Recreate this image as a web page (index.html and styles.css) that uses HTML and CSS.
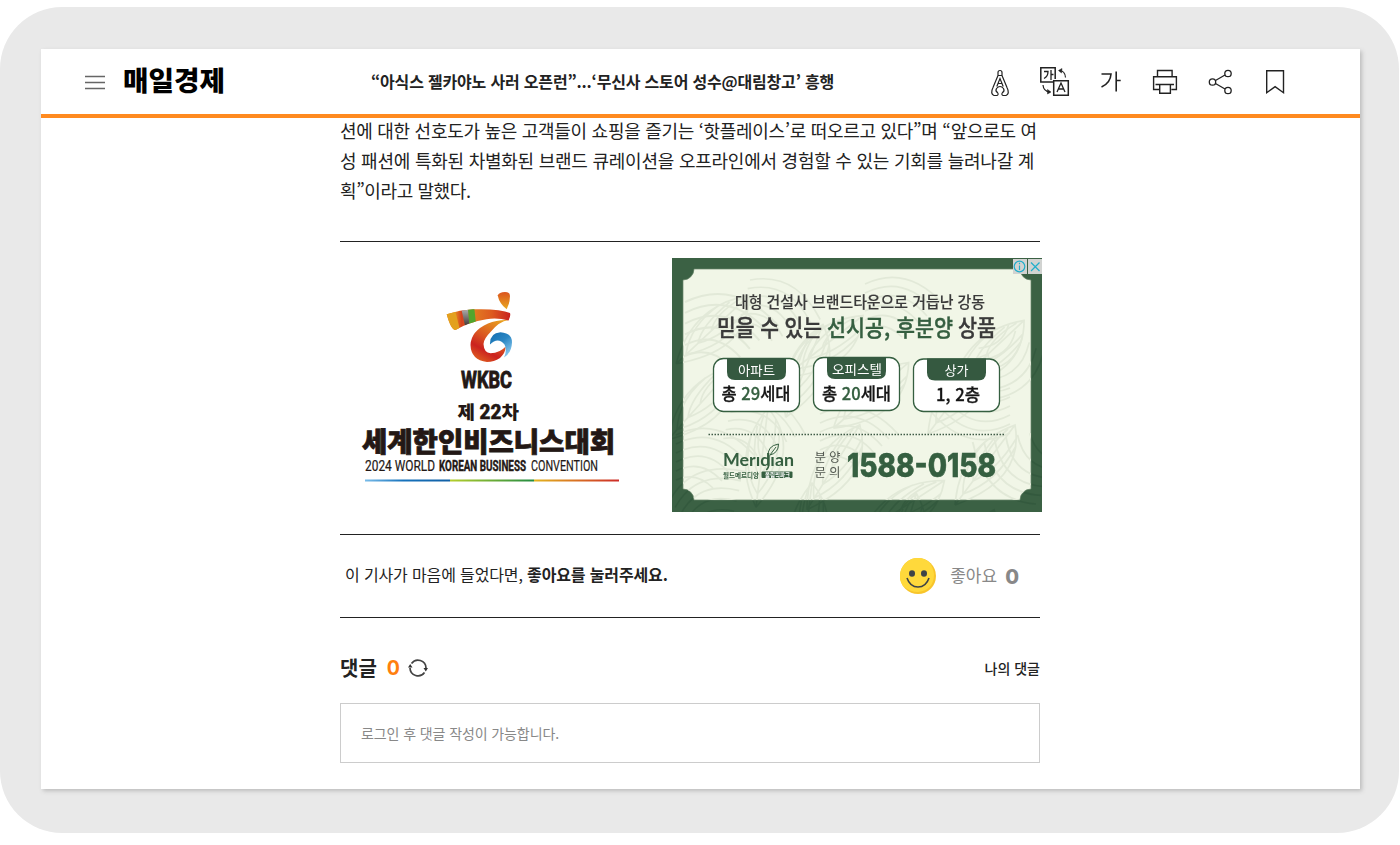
FILE: index.html
```html
<!DOCTYPE html>
<html lang="ko">
<head>
<meta charset="utf-8">
<title>매일경제</title>
<link rel="stylesheet" href="styles.css">
</head>
<body>
<div class="frame">
<div class="window">
  <header class="header">
    <svg class="menu" viewBox="0 0 20 15" width="20" height="15"><path d="M0 1.5h20M0 7.5h20M0 13.5h20" stroke="#666" stroke-width="1.3"/></svg>
    <svg class="logo" viewBox="0 0 104 44" width="104" height="44"><text x="1" y="31" textLength="102" lengthAdjust="spacingAndGlyphs">매일경제</text></svg>
    <h1 class="title">“아식스 젤카야노 사러 오픈런”...‘무신사 스토어 성수@대림창고’ 흥행</h1>
    <svg class="tools" viewBox="985 62 310 42" width="310" height="42">
      <g fill="none" stroke="#222" stroke-width="1.2">
        <path d="M998 76.500v-3q0-2 2-2t2 2v3M997.500 76.500h5M998 76.500l-5 12q-3 6 1 8h3q2-1 .5-3-2.500-1.500-1-4 1.500-2 3.500-2t3.500 2q1.500 2.500-1 4-1.500 2 .5 3h3q4-2 1-8l-5-12"/><path d="M996.800 87.500l3.200-8 3.200 8M998 84.500h4"/>
        <g stroke-width="1.5">
          <path d="M1053 83h-12.200V68.800h14.400V80M1053.700 81.800h14.600v14.400h-14.600z"/>
          <path d="M1044 72.500h4q0 5-4 7M1051 71v10M1051 75.500h2.500M1057 93l4-9 4 9M1058.500 90h5" stroke-width="1.3"/>
          <path d="M1059 71.500q6 0 6.500 7M1043 86q.5 6.500 7 7" stroke-width="1.200"/><path d="M1062 69.500l-3.500 2 3 2.500zM1047.500 90.500l3.500 2.500-3.500 2z" fill="#222" stroke-width=".5"/>
        </g>
        <path d="M1101.500 75h9.500q-.5 9-9.500 13M1116.200 72.500v20M1116.200 81.500h4.500" stroke-width="1.600"/>
        <path d="M1157.500 77.800v-6.300h14.600v6.300M1159 90.500h-5.400V77.800h22.800v12.700h-5M1155.500 85.500h18.500M1159.700 85.500h10.700v8.800h-10.700z" stroke-width="1.4"/>
        <path d="M1215.500 81.500l9.500-5.500M1215.500 84.500l9.500 5.500" stroke-width="1.3"/>
        <circle cx="1212.500" cy="83" r="3.200" stroke-width="1.300"/><circle cx="1228" cy="74.500" r="3.200" stroke-width="1.300"/><circle cx="1228" cy="91.500" r="3.200" stroke-width="1.300"/>
        <path d="M1266.700 71.700h16.800v22l-8.400-6-8.400 6z" stroke-width="1.400"/>
      </g>
    </svg>
  </header>
  <main class="article">
    <p class="body-text"><span class="line l1">션에 대한 선호도가 높은 고객들이 쇼핑을 즐기는 ‘핫플레이스’로 떠오르고 있다”며 “앞으로도 여</span><span class="line l2">성 패션에 특화된 차별화된 브랜드 큐레이션을 오프라인에서 경험할 수 있는 기회를 늘려나갈 계</span><span class="line l3">획”이라고 말했다.</span></p>
    <section class="ads">
      <svg viewBox="340 258 332 254" width="332" height="254" class="wkbc">
        <defs>
          <linearGradient id="drop" x2="0" y2="1"><stop stop-color="#db541e"/><stop offset="1" stop-color="#e9a91f"/></linearGradient>
          <linearGradient id="arm" gradientUnits="userSpaceOnUse" x1="447" x2="511" y1="0" y2="0"><stop offset=".15" stop-color="#e27b21"/><stop offset=".23" stop-color="#d5401f"/><stop offset=".42" stop-color="#e27b21"/><stop offset=".7" stop-color="#dd5a20"/><stop offset="1" stop-color="#c82021"/></linearGradient>
          <linearGradient id="curl" x1=".8" y1="0" x2=".3" y2="1"><stop stop-color="#e9a01f"/><stop offset=".5" stop-color="#d95220"/><stop offset=".75" stop-color="#cb221f"/><stop offset="1" stop-color="#dd5a20"/></linearGradient>
          <linearGradient id="wave" x2=".7" y2="1"><stop stop-color="#136db0"/><stop offset=".5" stop-color="#2a86c3"/><stop offset="1" stop-color="#8bcaf0"/></linearGradient>
          <linearGradient id="b1"><stop stop-color="#79bce9"/><stop offset=".45" stop-color="#1672bc"/><stop offset="1" stop-color="#1260a5"/></linearGradient>
          <linearGradient id="b2"><stop stop-color="#b5ce2b"/><stop offset="1" stop-color="#228b42"/></linearGradient>
          <linearGradient id="b3"><stop stop-color="#e3b51e"/><stop offset="1" stop-color="#cd2b28"/></linearGradient>
          <linearGradient id="grey" x2="0" y1=".2" y2=".9"><stop stop-color="#aaa"/><stop offset="1" stop-color="#3c3432"/></linearGradient>
          <clipPath id="armclip"><path d="M446.700 314.300Q460 310 473 309.300Q500 308.500 510 313Q511 316 508.500 320.500Q497 317.500 486.500 319.300Q468 322.500 455.500 330Q451 330 446.700 314.300Z"/></clipPath>
        </defs>
        <path d="M497.700 295.500Q499 292 505 292Q510 292 510 296Q510 303 506.700 309.300Q499.500 304 497.700 295.500Z" fill="url(#drop)"/>
        <path d="M508.500 320Q499 321.500 491 331.500Q483.500 339 483.500 344Q484 353 490.500 353.200Q500 353 505.700 346.500Q505.500 353 500 358Q494 362 487 362Q471 360 470.500 345Q471 331 488 323.500Q497 319.500 508.500 320Z" fill="url(#curl)"/>
        <g clip-path="url(#armclip)"><path d="M440 300h75v35h-75z" fill="url(#arm)"/><path d="M440 308h14.500l6 24h-20z" fill="#e3a11f"/><path d="M460.500 305h7.500l1.700 24h-4z" fill="url(#grey)"/><path d="M467.700 305h6.300l2.500 24h-6.800z" fill="#52a52d"/></g>
        <path d="M490 344.500Q489.500 333 500.500 332.300Q512 333 512 342.500Q511.500 353 504 357.500Q507.500 350 504.500 344.500Q498 336.500 490 344.500Z" fill="url(#wave)"/>
        <g fill="#231815" class="kr">
          <text x="461" y="388" class="latin" font-size="23" font-weight="700" textLength="51" lengthAdjust="spacingAndGlyphs" stroke="#231815" stroke-width=".9">WKBC</text>
          <g font-size="18.500" font-weight="900"><text x="457.500" y="418.500" textLength="17.500" lengthAdjust="spacingAndGlyphs">제</text><text x="479.500" y="418.500" textLength="22" lengthAdjust="spacingAndGlyphs" class="latin" font-size="20" stroke="#231815" stroke-width=".4">22</text><text x="501.500" y="418.500" textLength="17.500" lengthAdjust="spacingAndGlyphs">차</text></g>
          <text x="362" y="452" font-size="27" font-weight="900" textLength="253" lengthAdjust="spacingAndGlyphs" stroke="#231815" stroke-width=".8">세계한인비즈니스대회</text>
          <g class="latin" font-size="14.500"><text x="365" y="471" textLength="70" lengthAdjust="spacingAndGlyphs" stroke="#231815" stroke-width=".2">2024 WORLD</text><text x="439" y="471" font-weight="700" textLength="87" lengthAdjust="spacingAndGlyphs" stroke="#231815" stroke-width=".4">KOREAN BUSINESS</text><text x="531" y="471" textLength="67" lengthAdjust="spacingAndGlyphs" stroke="#231815" stroke-width=".2">CONVENTION</text></g>
        </g>
        <path fill="url(#b1)" d="M365 479.500h85v2h-85z"/><path fill="url(#b2)" d="M450 479.500h84v2h-84z"/><path fill="url(#b3)" d="M534 479.500h85v2h-85z"/>
      </svg>
      <svg viewBox="672 258 370 254" width="370" height="254" class="meridian">
        <defs>
          <g id="leaf" fill="none"><path d="M0 80Q5 20 60 0Q70 55 0 80M0 80L60 0M8 69Q7 40 32 15M8 69Q42 57 61 21M18 56Q18 38 42 10M18 56Q42 45 61 14M29 41Q29 25 53 4"/></g>
          <g id="arc" fill="none"><path d="M0 0Q42-20 78 20M0 9Q38-10 69 25M0 18Q35 0 62 32M0 27Q31 11 54 39M0 36Q25 23 46 46M0 45Q20 36 37 53"/></g>
          <clipPath id="inside"><path d="M694 269h326a11 11 0 0 0 11 11v209a11 11 0 0 0-11 11H694a11 11 0 0 0-11-11V280a11 11 0 0 0 11-11z"/></clipPath>
          <g id="foliage">
            <use href="#arc" transform="translate(685 302) scale(1.200)"/><use href="#leaf" transform="translate(675 360) rotate(5)"/><use href="#leaf" transform="translate(765 340) rotate(-15)"/><use href="#leaf" transform="translate(850 350) rotate(12)"/><use href="#arc" transform="translate(865 284)"/><use href="#leaf" transform="translate(928 354)"/><use href="#arc" transform="translate(1043 354) rotate(130)"/><use href="#leaf" transform="translate(716 438) rotate(-30)"/><use href="#arc" transform="translate(676 435)"/><use href="#leaf" transform="translate(800 430) rotate(-5)"/><use href="#arc" transform="translate(820 414)"/><use href="#leaf" transform="translate(888 460) rotate(20)"/><use href="#arc" transform="translate(1036 504) rotate(210) scale(1.100)"/><use href="#leaf" transform="translate(760 513) rotate(-30)"/><use href="#leaf" transform="translate(860 514) rotate(-20)"/><use href="#arc" transform="translate(1010 433) rotate(180)"/><use href="#leaf" transform="translate(955 425)"/>
            <use href="#leaf" transform="translate(965 310) rotate(10)"/><use href="#arc" transform="translate(750 280) rotate(15)"/><use href="#arc" transform="translate(670 500) rotate(-35)"/><use href="#leaf" transform="translate(690 285) rotate(10)"/><use href="#leaf" transform="translate(805 300) rotate(15)"/><use href="#arc" transform="translate(735 395) rotate(15)"/><use href="#leaf" transform="translate(935 520) rotate(-10)"/>
          </g>
        </defs>
        <path fill="#3b6144" d="M672 258h370v254H672z"/>
        <use href="#foliage" stroke="#2d5338" stroke-width="1.500" opacity=".5"/>
        <path d="M694 269h326a11 11 0 0 0 11 11v209a11 11 0 0 0-11 11H694a11 11 0 0 0-11-11V280a11 11 0 0 0 11-11z" fill="#f1f6e7" stroke="#68856a" stroke-width=".7"/>
        <g clip-path="url(#inside)"><use href="#foliage" stroke="#e2e9d8" stroke-width="1.700"/></g>
        <g class="kr" fill="#3a3a3a">
          <text x="735" y="308" font-size="15.500" font-weight="500" textLength="250" lengthAdjust="spacingAndGlyphs" stroke="#3a3a3a" stroke-width=".15">대형 건설사 브랜드타운으로 거듭난 강동</text>
          <g font-size="22.500" font-weight="500" stroke-width=".4"><text x="717" y="335.500" textLength="105" lengthAdjust="spacingAndGlyphs" stroke="#3a3a3a">믿을 수 있는</text><text x="827" y="335.500" textLength="126" lengthAdjust="spacingAndGlyphs" fill="#355f40" stroke="#355f40">선시공, 후분양</text><text x="958" y="335.500" textLength="38" lengthAdjust="spacingAndGlyphs" stroke="#3a3a3a">상품</text></g>
        </g>
        <g fill="#fff" stroke="#355f40" stroke-width="1.300"><rect x="713.500" y="358.500" width="86" height="53" rx="10"/><rect x="813.500" y="357.500" width="86" height="53" rx="10"/><rect x="913.500" y="359" width="86" height="52.500" rx="10"/></g>
        <g fill="#355940"><path d="M727 358h59v14q0 8-8 8h-43q-8 0-8-8zM827 357h59v14q0 8-8 8h-43q-8 0-8-8zM927 358.500h59v14q0 8-8 8h-43q-8 0-8-8z"/></g>
        <g class="kr" fill="#fff" font-size="13"><text x="738" y="375" textLength="37" lengthAdjust="spacingAndGlyphs">아파트</text><text x="832" y="374" textLength="50" lengthAdjust="spacingAndGlyphs">오피스텔</text><text x="944.500" y="375" textLength="24" lengthAdjust="spacingAndGlyphs">상가</text></g>
        <g class="kr" fill="#151515" font-size="17.500" font-weight="500" stroke="#151515" stroke-width=".3"><text x="721.500" y="400" textLength="69" lengthAdjust="spacingAndGlyphs">총 <tspan fill="#355f40" stroke="#355f40">29</tspan>세대</text><text x="822" y="400" textLength="69" lengthAdjust="spacingAndGlyphs">총 <tspan fill="#355f40" stroke="#355f40">20</tspan>세대</text><text x="936" y="401" textLength="44" lengthAdjust="spacingAndGlyphs">1, 2층</text></g>
        <path d="M708.500 434.500h296" stroke="#405c47" stroke-width="1.500" stroke-dasharray="1.500 1.500"/>
        <g fill="#355f40"><text x="723" y="465.500" class="brand" font-size="16.500" font-weight="700" textLength="71" lengthAdjust="spacingAndGlyphs">Merıdıan</text>
          <path d="M768.800 455v9q0 4-2.500 6" fill="none" stroke="#355f40" stroke-width="1.600"/><path d="M768.500 457q-2-11 10-13 0 9-8.500 11l6-8" fill="none" stroke="#355f40"/>
          <text x="723" y="477.500" class="kr" font-size="6.700" font-weight="700" textLength="36" lengthAdjust="spacingAndGlyphs">월드메르디앙</text><rect x="761.500" y="471.500" width="31" height="6.500" rx="1"/><text x="765" y="477" class="kr" font-size="6" fill="#fff" font-weight="700" textLength="25" lengthAdjust="spacingAndGlyphs">올림픽파크</text>
          <g class="kr" fill="#51574f" font-size="12.500"><text x="814.500" y="462" textLength="26">분양</text><text x="814.500" y="477" textLength="26">문의</text></g>
          <text x="847" y="477" class="phone" font-size="32" font-weight="800" textLength="149" lengthAdjust="spacingAndGlyphs" stroke="#355f40" stroke-width=".6">1588-0158</text></g>
        <path fill="#d1d3d1" d="M1013 259h14v15h-14zM1028 259h14v15h-14z"/><g fill="none" stroke="#20aecb" stroke-width="1.200"><circle cx="1019.500" cy="266.500" r="5.300"/><path d="M1019.500 265.500v4.500M1019.500 262.700v1.500M1031 262.500l8.500 8.500M1039.500 262.500l-8.500 8.500"/></g>
      </svg>
    </section>
    <section class="like">
      <p class="like-copy">이 기사가 마음에 들었다면, <b>좋아요를 눌러주세요.</b></p>
      <div class="like-action"><svg viewBox="0 0 36 36" width="36" height="36"><circle cx="18" cy="18" r="18" fill="#f8c52b"/><path d="M18 0A18 18 0 0 0 3 28Q10 34 18 34Q34 32 34 16Q33 9 29 4Q24 0 18 0Z" fill="#ffd93b"/><g fill="#3e4347"><ellipse cx="12" cy="15.500" rx="3" ry="3.300"/><ellipse cx="24" cy="15.500" rx="3" ry="3.300"/></g><path d="M7 20q3 9 11 9t11-9" fill="none" stroke="#3e4347" stroke-width="1.600"/></svg><span class="like-label">좋아요</span><strong class="zero">0</strong></div>
    </section>
    <section class="comments">
      <div class="comment-head"><h2>댓글</h2><strong class="count">0</strong><svg viewBox="0 0 20 18" width="20" height="18"><g fill="none" stroke="#444" stroke-width="1.700"><path d="M3.500 4.500A8 8 0 0 1 18 9M16.500 13.500A8 8 0 0 1 2 9"/></g><path d="M15.500 9h4.500l-2.200 3.500zM0 8.500h4.500L2.200 5z" fill="#333"/></svg><a class="mine">나의 댓글</a></div>
      <div class="comment-box">로그인 후 댓글 작성이 가능합니다.</div>
    </section>
  </main>
</div>
</div>
</body>
</html>
```
FILE: styles.css
```css
* { box-sizing: border-box; }
body { margin: 0; padding-top: 7px; background: #fff; color: #222; font-family: "Noto Sans CJK KR", sans-serif; }
h1, h2, p { margin: 0; }
svg { display: block; flex: none; }
.frame { width: 1399px; height: 826px; border-radius: 62px; background: #e9e9e9; padding: 42px 39px 44px 41px; }
.window { height: 740px; background: #fff; box-shadow: 2px 2px 4px #bdbdbd; }
.header { position: relative; z-index: 1; height: 69px; background: #fff; border-bottom: 4px solid #ff8a1f; display: flex; align-items: center; padding-left: 44px; }
.menu { margin-top: 2px; }
.logo { margin-left: 17px; font-size: 27px; font-weight: 900; fill: #000; }
.title { width: 463px; margin: 0 0 2px 145px; white-space: nowrap; font-size: 16px; line-height: 24px; font-weight: 700; letter-spacing: -.18px; }
.tools { margin-left: 151px; }
.article { width: 700px; margin: -3px 0 0 299px; }
.body-text { font-size: 18px; line-height: 30px; height: 127px; border-bottom: 1px solid #222; }
.line { display: block; white-space: nowrap; }
.l1 { letter-spacing: -.285px; }
.l2 { letter-spacing: -.24px; }
.l3 { letter-spacing: -.4px; }
.ads { display: flex; margin: 16px -2px 22px 0; }
.kr { font-family: "Noto Sans CJK KR", sans-serif; }
.latin { font-family: Roboto, sans-serif; }
.brand { font-family: Lato, sans-serif; }
.phone { font-family: Inter, sans-serif; }
.like { height: 84px; border-top: 1px solid #222; border-bottom: 1px solid #222; display: flex; align-items: center; justify-content: space-between; padding: 0 20px 0 5px; }
.like-copy { font-size: 16px; line-height: 24px; letter-spacing: -.14px; padding-bottom: 4px; }
.like-action { display: flex; align-items: center; color: #888; }
.like-label { font-size: 17px; line-height: 24px; margin: 0 0 3px 14px; }
.zero { font-family: Inter, sans-serif; font-size: 20px; font-weight: 800; line-height: 24px; margin: 2px 0 0 8px; padding-right: 1px; }
.comment-head { display: flex; align-items: center; height: 85px; padding-top: 14px; }
.comment-head h2 { font-size: 20px; }
.count { font-family: Inter, sans-serif; color: #ff7f0e; font-size: 19.500px; margin: 0 8px 0 10px; }
.mine { margin-left: auto; font-size: 14px; font-weight: 500; }
.comment-box { height: 60px; border: 1px solid #ccc; padding-left: 20px; display: flex; align-items: center; color: #888; font-size: 14px; letter-spacing: -.1px; }
```
